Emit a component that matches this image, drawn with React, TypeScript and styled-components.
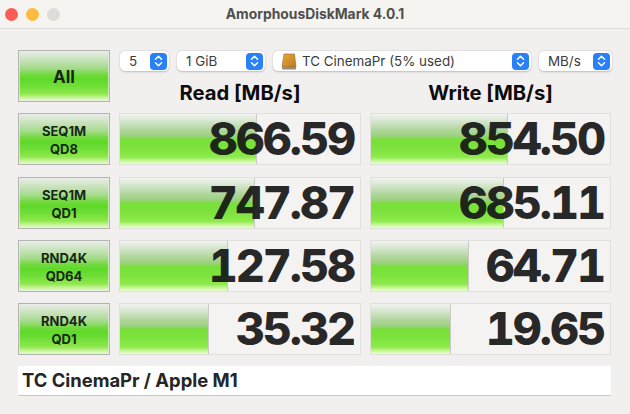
import React from 'react';
import styled, {createGlobalStyle} from 'styled-components';

const GlobalStyle = createGlobalStyle`
  html, body {
    margin: 0;
    padding: 0;
    background: #f2f0ee;
  }
  body {
    font-family: Inter, "Liberation Sans", sans-serif;
  }
`;

const buttonGradient = `linear-gradient(
  180deg,
  #e9eee7 0%,
  #c8e2bb 18%,
  #9fdb84 36%,
  #72da3e 47%,
  #5fd92a 56%,
  #6fdf36 70%,
  #90e84e 86%,
  #c4f396 93%,
  #e8fcd0 100%
)`;

const barGradient = `linear-gradient(
  180deg,
  #f1f4f0 0%,
  #d6e6cf 14%,
  #b0d69c 32%,
  #98d078 46%,
  #78e038 50%,
  #7ce23c 66%,
  #8cea4a 86%,
  #c2f590 93%,
  #ecfdd6 100%
)`;

const Window = styled.div`
  width: 630px;
  height: 414px;
  overflow: hidden;
  background: #f2f0ee;
  display: flex;
  flex-direction: column;
`;

const TitleBar = styled.div`
  height: 28px;
  flex: none;
  display: flex;
  align-items: center;
  justify-content: center;
  position: relative;
  background: #f5f4f1;
  border-bottom: 1px solid #dfdedb;
  font-size: 13.85px;
  font-weight: 700;
  color: #4f4f4e;
`;

const Lights = styled.div`
  position: absolute;
  left: 5px;
  top: 8px;
  display: flex;
  gap: 8px;
`;

const Light = styled.span<{$color: string}>`
  width: 13px;
  height: 13px;
  border-radius: 50%;
  background: ${p => p.$color};
`;

const Content = styled.div`
  padding: 21px 18px 0;
  display: grid;
  grid-template-columns: 92px 242px 241px;
  grid-auto-rows: 52px;
  column-gap: 9px;
  row-gap: 11.25px;
`;

const Button = styled.div`
  box-sizing: border-box;
  border: 1px solid #b4b4b2;
  box-shadow: inset 0 0 0 1px rgba(235, 235, 232, 0.7);
  background: ${buttonGradient};
  padding-top: 2px;
  display: flex;
  flex-direction: column;
  align-items: center;
  justify-content: center;
  color: #182615;
  font-size: 13px;
  font-weight: 700;
  line-height: 18px;
`;

const AllLabel = styled.span`
  font-size: 17px;
`;

const HeadArea = styled.div`
  grid-column: 2 / 4;
  display: flex;
  flex-direction: column;
`;

const Selects = styled.div`
  display: flex;
  gap: 8px;
  padding: 1px 0 0 1px;
`;

const Select = styled.div<{$width: number}>`
  box-sizing: border-box;
  width: ${p => p.$width}px;
  height: 20px;
  flex: none;
  background: #fff;
  border-radius: 5px;
  box-shadow: 0 0.5px 2px rgba(0, 0, 0, 0.22);
  display: flex;
  align-items: center;
  padding: 0 2px 0 9px;
  font-size: 13.4px;
  color: #3c3c3b;
`;

const SelectLabel = styled.span`
  flex: 1;
  white-space: nowrap;
`;

const Stepper = styled.span`
  width: 17px;
  height: 17px;
  border-radius: 4px;
  background: #2a80f5;
  display: flex;
  align-items: center;
  justify-content: center;
`;

const DriveIcon = styled.svg`
  width: 16px;
  height: 17px;
  margin: 0 5px 0 -1px;
  flex: none;
`;

const Headers = styled.div`
  display: grid;
  grid-template-columns: 242px 241px;
  column-gap: 9px;
  margin-top: 10px;
`;

const Heading = styled.div`
  text-align: center;
  font-size: 20.2px;
  font-weight: 700;
  line-height: 24px;
  color: #0c0c0c;
`;

const Meter = styled.div`
  box-sizing: border-box;
  position: relative;
  border: 1px solid #e0dfdc;
  background: #f4f3f1;
  display: flex;
  align-items: center;
  justify-content: flex-end;
  padding-right: 6px;
`;

const Bar = styled.div`
  position: absolute;
  left: 0;
  top: 0;
  bottom: 0;
  border-right: 1px solid #c9c9c6;
  background: ${barGradient};
`;

const Value = styled.span`
  position: relative;
  font-size: 45px;
  font-weight: 800;
  line-height: 50px;
  letter-spacing: -2px;
  font-variant-numeric: tabular-nums;
  color: rgba(20, 20, 20, 0.92);
`;

const Footer = styled.div`
  box-sizing: border-box;
  grid-column: 1 / 4;
  height: 30px;
  background: #fff;
  border-bottom: 1px solid #c8c8c6;
  padding: 0 0 2px 4px;
  display: flex;
  align-items: center;
  font-size: 18.4px;
  font-weight: 700;
  color: #262626;
`;

const Chevrons = () => (
  <svg width="11" height="14" viewBox="0 0 11 14" fill="none" stroke="#fff" strokeWidth="1.5" strokeLinecap="round" strokeLinejoin="round">
    <path d="M2.5 5.2 5.5 2.2l3 3" />
    <path d="M2.5 8.8l3 3 3-3" />
  </svg>
);

const Drive = () => (
  <DriveIcon viewBox="0 0 16 17">
    <defs>
      <linearGradient id="drive" x1="0" y1="0" x2="1" y2="1">
        <stop offset="0" stopColor="#eba83a" />
        <stop offset="1" stopColor="#b97a20" />
      </linearGradient>
    </defs>
    <path d="M3 1h10.5L15 14H1z" fill="url(#drive)" stroke="#8a6a34" strokeWidth="0.6" />
    <rect x="1" y="14" width="14" height="2.4" rx="0.6" fill="#8f8d88" />
  </DriveIcon>
);

const rows = [
  {top: 'SEQ1M', bottom: 'QD8', read: '866.59', readBar: 136, write: '854.50', writeBar: 136},
  {top: 'SEQ1M', bottom: 'QD1', read: '747.87', readBar: 134, write: '685.11', writeBar: 132},
  {top: 'RND4K', bottom: 'QD64', read: '127.58', readBar: 107, write: '64.71', writeBar: 97},
  {top: 'RND4K', bottom: 'QD1', read: '35.32', readBar: 88, write: '19.65', writeBar: 79},
];

const App = () => (
  <Window>
    <GlobalStyle />
    <TitleBar>
      <Lights>
        <Light $color="#fc5c57" />
        <Light $color="#fdbb40" />
        <Light $color="#dddcda" />
      </Lights>
      AmorphousDiskMark 4.0.1
    </TitleBar>
    <Content>
      <Button>
        <AllLabel>All</AllLabel>
      </Button>
      <HeadArea>
        <Selects>
          <Select $width={49}>
            <SelectLabel>5</SelectLabel>
            <Stepper><Chevrons /></Stepper>
          </Select>
          <Select $width={88}>
            <SelectLabel>1 GiB</SelectLabel>
            <Stepper><Chevrons /></Stepper>
          </Select>
          <Select $width={258}>
            <Drive />
            <SelectLabel>TC CinemaPr (5% used)</SelectLabel>
            <Stepper><Chevrons /></Stepper>
          </Select>
          <Select $width={73}>
            <SelectLabel>MB/s</SelectLabel>
            <Stepper><Chevrons /></Stepper>
          </Select>
        </Selects>
        <Headers>
          <Heading>Read [MB/s]</Heading>
          <Heading>Write [MB/s]</Heading>
        </Headers>
      </HeadArea>
      {rows.map(row => (
        <React.Fragment key={row.top + row.bottom}>
          <Button>
            <span>{row.top}</span>
            <span>{row.bottom}</span>
          </Button>
          <Meter>
            <Bar style={{width: row.readBar}} />
            <Value>{row.read}</Value>
          </Meter>
          <Meter>
            <Bar style={{width: row.writeBar}} />
            <Value>{row.write}</Value>
          </Meter>
        </React.Fragment>
      ))}
      <Footer>TC CinemaPr / Apple M1</Footer>
    </Content>
  </Window>
);

export default App;
